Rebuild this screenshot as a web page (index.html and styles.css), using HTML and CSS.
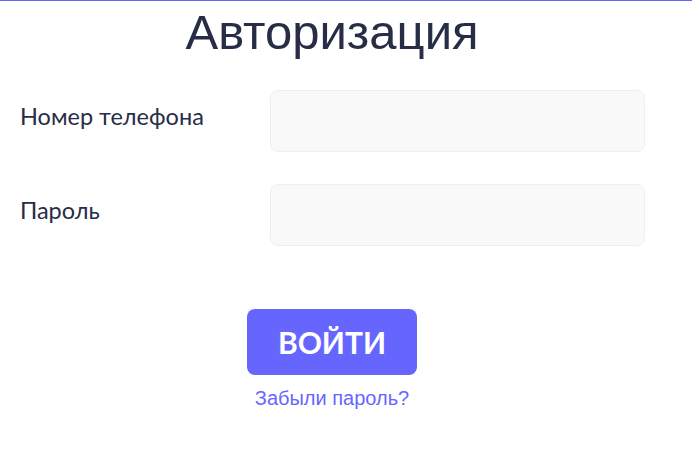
FILE: index.html
```html
<!DOCTYPE html>
<html lang="ru">
<head>
<meta charset="utf-8">
<link rel="stylesheet" href="styles.css">
</head>
<body>
<div class="page">
  <h1 class="title">Авторизация</h1>
  <form class="form">
    <div class="row">
      <label class="label">Номер телефона</label>
      <input class="field" type="text">
    </div>
    <div class="row">
      <label class="label">Пароль</label>
      <input class="field" type="password">
    </div>
    <div class="actions">
      <button class="btn" type="button">ВОЙТИ</button>
      <a class="link" href="#">Забыли пароль?</a>
    </div>
  </form>
</div>
</body>
</html>
```
FILE: styles.css
```css
html, body {
  margin: 0;
  padding: 0;
  background: #fff;
}
body {
  border-top: 1px solid #6666ff;
}
.page {
  width: 664px;
}
.title {
  margin: 0;
  height: 62px;
  text-align: center;
  font-family: "Liberation Sans", Arial, sans-serif;
  font-weight: 400;
  font-size: 49px;
  line-height: 62px;
  color: #272d45;
}
.form {
  display: flex;
  flex-direction: column;
  margin-top: 27px;
}
.row {
  display: flex;
  align-items: center;
  height: 62px;
  margin-bottom: 32px;
}
.label {
  width: 250px;
  padding-left: 20px;
  margin-bottom: 10px;
  font-family: Lato, "Open Sans", sans-serif;
  font-size: 23.5px;
  color: #272d45;
}
.field {
  box-sizing: border-box;
  width: 375px;
  height: 62px;
  margin: 0;
  background: #f9f9f9;
  border: 1px solid #efefef;
  border-radius: 8px;
  outline: none;
}
.actions {
  display: flex;
  flex-direction: column;
  align-items: center;
  margin-top: 31px;
}
.btn {
  width: 170px;
  height: 66px;
  background: #6666ff;
  border: none;
  border-radius: 8px;
  color: #fff;
  font-family: Lato, "Open Sans", sans-serif;
  font-weight: 700;
  font-size: 30px;
  padding: 0;
}
.link {
  margin-top: 12px;
  font-family: "Liberation Sans", Arial, sans-serif;
  font-size: 20px;
  color: #6666ff;
  text-decoration: none;
}
```
